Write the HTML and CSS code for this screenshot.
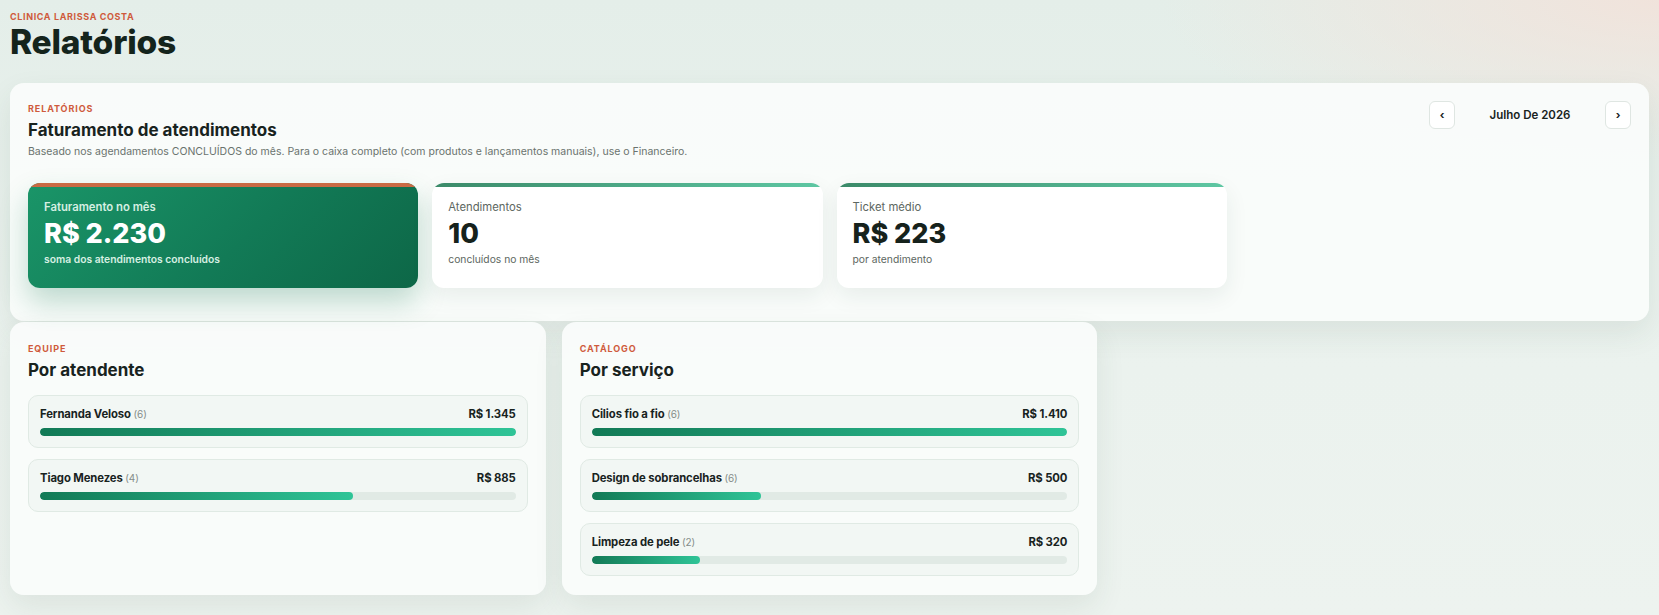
FILE: index.html
```html
<!DOCTYPE html>
<html lang="pt-BR">
<head>
    <meta charset="UTF-8">
    <meta name="viewport" content="width=device-width, initial-scale=1.0">
    <title>Relatórios - Clinica Larissa Costa</title>
    <link rel="stylesheet" href="styles.css">
</head>
<body>
    <header class="page-header">
        <div class="eyebrow">CLINICA LARISSA COSTA</div>
        <h1>Relatórios</h1>
    </header>

    <section class="panel">
        <div class="panel-head">
            <div>
                <div class="label">RELATÓRIOS</div>
                <h2>Faturamento de atendimentos</h2>
                <p class="hint">Baseado nos agendamentos CONCLUÍDOS do mês. Para o caixa completo (com produtos e lançamentos manuais), use o Financeiro.</p>
            </div>
            <div class="month-nav">
                <button class="nav-btn">&lsaquo;</button>
                <span class="month">Julho De 2026</span>
                <button class="nav-btn">&rsaquo;</button>
            </div>
        </div>

        <div class="stats">
            <div class="stat stat-main">
                <div class="stat-label">Faturamento no mês</div>
                <div class="stat-value">R$ 2.230</div>
                <div class="stat-sub">soma dos atendimentos concluídos</div>
            </div>
            <div class="stat">
                <div class="stat-label">Atendimentos</div>
                <div class="stat-value">10</div>
                <div class="stat-sub">concluídos no mês</div>
            </div>
            <div class="stat">
                <div class="stat-label">Ticket médio</div>
                <div class="stat-value">R$ 223</div>
                <div class="stat-sub">por atendimento</div>
            </div>
        </div>
    </section>

    <div class="breakdown">
        <section class="card">
            <div class="label">EQUIPE</div>
            <h3>Por atendente</h3>
            <div class="rows">
                <div class="row">
                    <div class="row-top">
                        <span class="row-name">Fernanda Veloso <span class="count">(6)</span></span>
                        <span class="row-amount">R$ 1.345</span>
                    </div>
                    <div class="bar"><div class="bar-fill" style="width: 100%"></div></div>
                </div>
                <div class="row">
                    <div class="row-top">
                        <span class="row-name">Tiago Menezes <span class="count">(4)</span></span>
                        <span class="row-amount">R$ 885</span>
                    </div>
                    <div class="bar"><div class="bar-fill" style="width: 65.8%"></div></div>
                </div>
            </div>
        </section>

        <section class="card">
            <div class="label">CATÁLOGO</div>
            <h3>Por serviço</h3>
            <div class="rows">
                <div class="row">
                    <div class="row-top">
                        <span class="row-name">Cilios fio a fio <span class="count">(6)</span></span>
                        <span class="row-amount">R$ 1.410</span>
                    </div>
                    <div class="bar"><div class="bar-fill" style="width: 100%"></div></div>
                </div>
                <div class="row">
                    <div class="row-top">
                        <span class="row-name">Design de sobrancelhas <span class="count">(6)</span></span>
                        <span class="row-amount">R$ 500</span>
                    </div>
                    <div class="bar"><div class="bar-fill" style="width: 35.5%"></div></div>
                </div>
                <div class="row">
                    <div class="row-top">
                        <span class="row-name">Limpeza de pele <span class="count">(2)</span></span>
                        <span class="row-amount">R$ 320</span>
                    </div>
                    <div class="bar"><div class="bar-fill" style="width: 22.7%"></div></div>
                </div>
            </div>
        </section>
    </div>
</body>
</html>
```

FILE: styles.css
```css
* {
    box-sizing: border-box;
}
body {
    margin: 0;
    padding: 10px 10px 20px;
    min-height: 615px;
    font-family: Inter, "Noto Sans", sans-serif;
    color: #18231e;
    background:
        radial-gradient(ellipse 500px 160px at 100% 0%, rgba(242, 226, 218, 0.9), rgba(242, 226, 218, 0)),
        linear-gradient(180deg, #e4eee9 0%, #ebf2ee 60%, #edf3ef 100%);
}
.page-header {
    margin-bottom: 22px;
}
.eyebrow {
    font-size: 9px;
    line-height: 14px;
    font-weight: 700;
    letter-spacing: 0.07em;
    color: #cf5a3c;
}
h1 {
    margin: 0;
    font-size: 33.5px;
    line-height: 37px;
    font-weight: 800;
    letter-spacing: -0.2px;
    color: #14241c;
}
.label {
    font-size: 9px;
    line-height: 16px;
    font-weight: 700;
    letter-spacing: 0.1em;
    color: #cf5a3c;
}

/* top panel */
.panel {
    background: rgba(250, 252, 251, 0.94);
    border-radius: 14px;
    padding: 18px 18px 33px;
    box-shadow: 0 12px 30px rgba(40, 80, 60, 0.09);
}
.panel-head {
    display: flex;
    justify-content: space-between;
    align-items: flex-start;
}
h2 {
    margin: 2px 0 0;
    font-size: 17px;
    line-height: 22px;
    font-weight: 700;
    color: #18231e;
}
.hint {
    margin: 3px 0 0;
    font-size: 10.5px;
    line-height: 16px;
    color: #6a736e;
}
.month-nav {
    display: flex;
    align-items: center;
    gap: 8px;
}
.nav-btn {
    width: 26px;
    height: 28px;
    padding: 0;
    border: 1px solid #dfe6e2;
    border-radius: 6px;
    background: #fff;
    font-family: inherit;
    font-size: 11px;
    font-weight: 700;
    color: #18231e;
    cursor: pointer;
}
.month {
    width: 134px;
    text-align: center;
    font-size: 11.5px;
    font-weight: 600;
    color: #18231e;
}

.stats {
    display: grid;
    grid-template-columns: repeat(4, 1fr);
    gap: 14px;
    margin-top: 23px;
}
.stat {
    position: relative;
    overflow: hidden;
    height: 105px;
    padding: 16px 16px 0;
    background: #fff;
    border-radius: 12px;
    box-shadow: 0 8px 22px rgba(30, 60, 45, 0.08);
}
.stat::before {
    content: "";
    position: absolute;
    top: 0;
    left: 0;
    right: 0;
    height: 4px;
    background: linear-gradient(90deg, #3b8a69, #5ec7a3);
}
.stat-label {
    font-size: 11.3px;
    line-height: 16px;
    color: #5d6761;
}
.stat-value {
    font-size: 27px;
    line-height: 37px;
    font-weight: 800;
    color: #16221c;
}
.stat-sub {
    font-size: 10.3px;
    line-height: 15px;
    color: #5d6761;
}
.stat-main {
    background: linear-gradient(135deg, #1a9568 0%, #127a56 55%, #0d6747 100%);
    box-shadow: 0 14px 28px rgba(20, 120, 80, 0.26);
}
.stat-main::before {
    background: #c96a44;
}
.stat-main .stat-label {
    color: #d6efe2;
    font-weight: 600;
}
.stat-main .stat-value {
    color: #fff;
}
.stat-main .stat-sub {
    color: #d6efe2;
    font-weight: 600;
}

/* breakdown cards */
.breakdown {
    display: grid;
    grid-template-columns: repeat(3, 1fr);
    gap: 16px;
    margin-top: 1px;
}
.card {
    background: rgba(250, 252, 251, 0.94);
    border-radius: 14px;
    padding: 19px 18px 19px;
    box-shadow: 0 12px 30px rgba(40, 80, 60, 0.09);
}
h3 {
    margin: 2px 0 0;
    font-size: 17px;
    line-height: 22px;
    font-weight: 700;
    color: #18231e;
}
.rows {
    display: flex;
    flex-direction: column;
    gap: 11px;
    margin-top: 14px;
}
.row {
    padding: 11px 11px;
    background: #f2f7f4;
    border: 1px solid #e0eae4;
    border-radius: 10px;
}
.row-top {
    display: flex;
    justify-content: space-between;
    align-items: baseline;
    height: 16px;
    margin-bottom: 5px;
}
.row-name,
.row-amount {
    font-size: 11.3px;
    font-weight: 700;
    letter-spacing: -0.1px;
    color: #18231e;
}
.count {
    font-size: 10px;
    font-weight: 400;
    color: #858d89;
}
.bar {
    height: 8px;
    border-radius: 4px;
    background: #e1eae5;
    overflow: hidden;
}
.bar-fill {
    height: 100%;
    border-radius: 4px;
    background: linear-gradient(90deg, #127a56, #2fc497);
}
```
